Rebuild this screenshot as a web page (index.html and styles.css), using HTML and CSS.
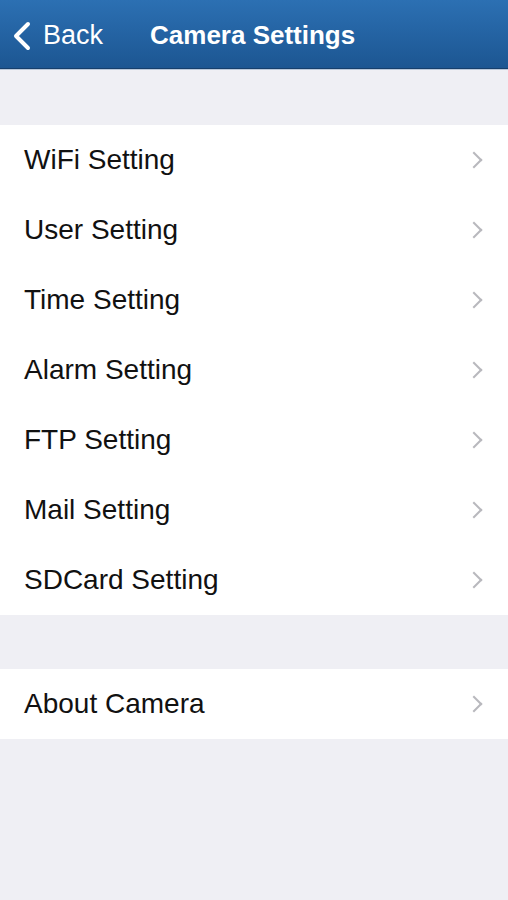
FILE: index.html
```html
<!DOCTYPE html>
<html lang="en">
<head>
    <meta charset="UTF-8">
    <meta name="viewport" content="width=device-width, initial-scale=1.0">
    <title>Camera Settings</title>
    <link rel="stylesheet" href="styles.css">
</head>
<body>
    <header class="navbar">
        <a class="back" href="#">
            <svg class="back-icon" width="20" height="30" viewBox="0 0 20 30">
                <path d="M16 3 L4 15 L16 27" fill="none" stroke="#fff" stroke-width="4" stroke-linecap="round" stroke-linejoin="round"/>
            </svg>
            <span>Back</span>
        </a>
        <h1 class="title">Camera Settings</h1>
    </header>

    <ul class="group">
        <li class="row"><span>WiFi Setting</span><span class="chevron"></span></li>
        <li class="row"><span>User Setting</span><span class="chevron"></span></li>
        <li class="row"><span>Time Setting</span><span class="chevron"></span></li>
        <li class="row"><span>Alarm Setting</span><span class="chevron"></span></li>
        <li class="row"><span>FTP Setting</span><span class="chevron"></span></li>
        <li class="row"><span>Mail Setting</span><span class="chevron"></span></li>
        <li class="row"><span>SDCard Setting</span><span class="chevron"></span></li>
    </ul>

    <ul class="group">
        <li class="row"><span>About Camera</span><span class="chevron"></span></li>
    </ul>
</body>
</html>
```

FILE: styles.css
```css
body {
    margin: 0;
    background: #efeff4;
    font-family: "Liberation Sans", Arial, sans-serif;
    min-height: 900px;
}

.navbar {
    height: 69px;
    box-sizing: border-box;
    padding-top: 3px;
    display: flex;
    align-items: center;
    background: linear-gradient(#2c70b3, #1c5692);
    border-bottom: 1px solid #163f6c;
    box-shadow: 0 1px 0 #b9c8da;
    color: #fff;
}

.back {
    display: flex;
    align-items: center;
    gap: 11px;
    margin-left: 12px;
    color: #fff;
    text-decoration: none;
    font-size: 27px;
}

.back-icon {
    display: block;
}

.title {
    margin: 0 0 0 47px;
    font-size: 26px;
    font-weight: bold;
}

.group {
    list-style: none;
    margin: 56px 0 0;
    padding: 0;
    background: #fff;
}

.group + .group {
    margin-top: 54px;
}

.row {
    height: 70px;
    display: flex;
    align-items: center;
    justify-content: space-between;
    padding: 0 24px;
    font-size: 28px;
    color: #111;
}

.chevron {
    width: 10px;
    height: 10px;
    margin-right: 4px;
    border-top: 2px solid #b8b8bd;
    border-right: 2px solid #b8b8bd;
    transform: rotate(45deg);
}
```
